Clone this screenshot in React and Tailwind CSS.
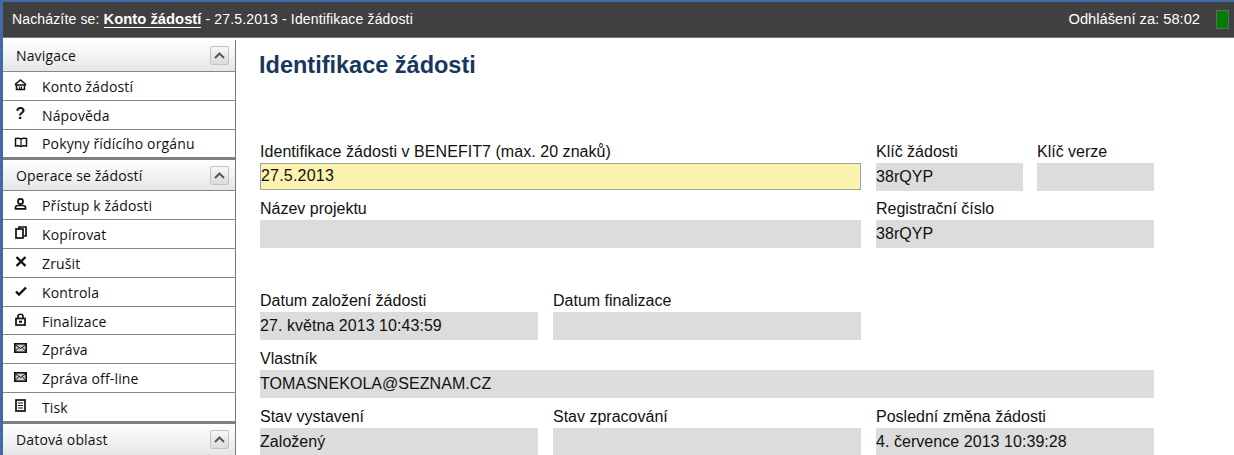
import React from "react";

function ChevronBox() {
  return (
    <div className="flex h-[19px] w-[19px] items-center justify-center rounded-[2px] border border-[#c4c4c4] bg-gradient-to-b from-[#f8f8f8] to-[#dcdcdc]">
      <svg width="11" height="7" viewBox="0 0 11 7" fill="none">
        <path d="M1 6 L5.5 1.5 L10 6" stroke="#555" strokeWidth="2" />
      </svg>
    </div>
  );
}

function Icon({ name }) {
  const c = "#111";
  if (name === "home")
    return (
      <svg width="13" height="12" viewBox="0 0 13 12" fill="none" stroke={c} strokeWidth="1.5">
        <path d="M1 5.5 L6.5 1 L12 5.5" />
        <path d="M1 6 H12" />
        <path d="M2.5 6 V10.5 H10.5 V6" />
        <path d="M5.5 7.5 V10.5 M7.5 7.5 V10.5" strokeWidth="1.2" />
      </svg>
    );
  if (name === "help")
    return <span className="w-[13px] text-center font-['Liberation_Sans',sans-serif] text-[16px] leading-none font-bold text-[#111]">?</span>;
  if (name === "book")
    return (
      <svg width="14" height="11" viewBox="0 0 14 11" fill="none" stroke={c} strokeWidth="1.5">
        <path d="M7 2 C5.5 1 3.5 1 1.5 1.5 V9 C3.5 8.5 5.5 8.5 7 9.5 C8.5 8.5 10.5 8.5 12.5 9 V1.5 C10.5 1 8.5 1 7 2 Z" />
        <path d="M7 2 V9.5" strokeWidth="1.2" />
      </svg>
    );
  if (name === "user")
    return (
      <svg width="13" height="12" viewBox="0 0 13 12" fill="none" stroke={c} strokeWidth="1.7">
        <circle cx="6.5" cy="3.5" r="2.6" />
        <path d="M1.5 10.8 V9.5 C1.5 8 3 7.5 4.5 7.5 H8.5 C10 7.5 11.5 8 11.5 9.5 V10.8 Z" />
      </svg>
    );
  if (name === "copy")
    return (
      <svg width="12" height="13" viewBox="0 0 12 13" fill="none" stroke={c} strokeWidth="1.7">
        <path d="M4 3 V1 H11 V10 H8.5" />
        <rect x="1" y="3" width="7" height="9" fill="#fff" />
      </svg>
    );
  if (name === "x")
    return (
      <svg width="12" height="11" viewBox="0 0 12 11" fill="none" stroke={c} strokeWidth="2.4">
        <path d="M1.5 1 L10.5 10 M10.5 1 L1.5 10" />
      </svg>
    );
  if (name === "check")
    return (
      <svg width="12" height="10" viewBox="0 0 12 10" fill="none" stroke={c} strokeWidth="2.4">
        <path d="M1 5.5 L4 8.5 L11 1.5" />
      </svg>
    );
  if (name === "lock")
    return (
      <svg width="11" height="13" viewBox="0 0 11 13" fill="none" stroke={c} strokeWidth="1.7">
        <path d="M3 5.5 V3.5 C3 0.5 8 0.5 8 3.5 V5.5" />
        <rect x="1" y="5.5" width="9" height="6.5" />
        <path d="M4 8.7 H7" strokeWidth="2" />
      </svg>
    );
  if (name === "mail")
    return (
      <svg width="13" height="10" viewBox="0 0 13 10" fill="none" stroke={c}>
        <rect x="0.8" y="0.8" width="11.4" height="8.4" strokeWidth="1.6" fill="#ccc" />
        <path d="M1 1.5 L6.5 5.5 L12 1.5 M1 8.5 L5 4.5 M12 8.5 L8 4.5" strokeWidth="1" />
      </svg>
    );
  return (
    <svg width="11" height="13" viewBox="0 0 11 13" fill="none" stroke={c} strokeWidth="1.7">
      <rect x="1" y="1" width="9" height="11" />
      <path d="M3 4 H8 M3 6.5 H8 M3 9 H8" strokeWidth="1.2" />
    </svg>
  );
}

function SideHeader({ title, className }) {
  return (
    <div className={`flex items-center justify-between border-b border-[#888] bg-gradient-to-b from-white to-[#e6e6e6] pr-[6px] pl-[13px] ${className}`}>
      <span className="text-[14px] tracking-[0.15px] text-[#111]">{title}</span>
      <ChevronBox />
    </div>
  );
}

function SideItem({ icon, label, className }) {
  return (
    <div className={`flex items-center bg-white ${className}`}>
      <div className="mr-[4px] flex w-[35px] justify-center pb-[3px]">
        <Icon name={icon} />
      </div>
      <span className="text-[14px] tracking-[0.15px] text-[#111]">{label}</span>
    </div>
  );
}

function Field({ label, value, className }) {
  return (
    <div className={className}>
      <div className="h-[30px] pt-[8px] text-[16px] leading-[22px] text-[#111]">{label}</div>
      <div className="h-[28px] bg-[#dcdcdc] text-[16px] leading-[27px] tracking-[0.05px] text-[#111]">{value}</div>
    </div>
  );
}

const row = "h-[29px] border-b border-[#888]";

const nav = [
  { icon: "home", label: "Konto žádostí", className: row },
  { icon: "help", label: "Nápověda", className: row },
  { icon: "book", label: "Pokyny řídícího orgánu", className: "h-[30px] border-b-[3px] border-[#808080]" },
];

const ops = [
  { icon: "user", label: "Přístup k žádosti", className: row },
  { icon: "copy", label: "Kopírovat", className: row },
  { icon: "x", label: "Zrušit", className: row },
  { icon: "check", label: "Kontrola", className: row },
  { icon: "lock", label: "Finalizace", className: "h-[28px] border-b border-[#888] pt-[1px]" },
  { icon: "mail", label: "Zpráva", className: row },
  { icon: "mail", label: "Zpráva off-line", className: row },
  { icon: "print", label: "Tisk", className: "h-[31px] border-b-[3px] border-[#808080]" },
];

export default function App() {
  return (
    <div className="h-[455px] w-[1234px] overflow-hidden border-t-2 border-l-[3px] border-[#3f6ca8] bg-white font-['Liberation_Sans',Arial,sans-serif]">
      <header className="flex h-[36px] items-center justify-between border-b border-[#777] bg-[#404040] pr-[5px] pl-[9px] text-[14px] tracking-[0.15px] text-white">
        <div>
          Nacházíte se: <span className="border-b border-white text-[14.8px] font-bold tracking-normal">Konto žádostí</span> - 27.5.2013 - Identifikace žádosti
        </div>
        <div className="flex items-center gap-[16px]">
          <span className="text-[14.7px] tracking-normal">Odhlášení za: 58:02</span>
          <div className="h-[19px] w-[13px] border border-[#666] bg-[#008000]" />
        </div>
      </header>
      <div className="flex">
        <aside className="mt-[2px] w-[233px] shrink-0 border-r border-[#777] font-['Open_Sans',sans-serif]">
          <SideHeader title="Navigace" className="h-[32px]" />
          {nav.map((n) => (
            <SideItem key={n.label} icon={n.icon} label={n.label} className={n.className} />
          ))}
          <SideHeader title="Operace se žádostí" className="h-[31px]" />
          {ops.map((n) => (
            <SideItem key={n.label} icon={n.icon} label={n.label} className={n.className} />
          ))}
          <SideHeader title="Datová oblast" className="h-[32px]" />
        </aside>
        <main className="pl-[24px]">
          <h1 className="mt-[11px] ml-[-1px] h-[32px] text-[23.5px] leading-[32px] font-bold text-[#17375e]">Identifikace žádosti</h1>
          <div className="mt-[52px] flex h-[57px] gap-[15px]">
            <div className="w-[601px]">
              <div className="h-[30px] pt-[8px] text-[16px] leading-[22px] tracking-[0.05px] text-[#111]">Identifikace žádosti v BENEFIT7 (max. 20 znaků)</div>
              <div className="h-[27px] border border-[#a0a0a0] bg-[#fbf3ae] text-[16px] leading-[23px] tracking-[0.2px] text-[#111]">27.5.2013</div>
            </div>
            <div className="flex gap-[14px]">
              <Field label="Klíč žádosti" value="38rQYP" className="w-[147px]" />
              <Field label="Klíč verze" value="" className="w-[117px]" />
            </div>
          </div>
          <div className="flex gap-[15px]">
            <Field label="Název projektu" value="" className="w-[601px]" />
            <Field label="Registrační číslo" value="38rQYP" className="w-[278px]" />
          </div>
          <div className="mt-[34px] flex gap-[15px]">
            <Field label="Datum založení žádosti" value="27. května 2013 10:43:59" className="w-[278px]" />
            <Field label="Datum finalizace" value="" className="w-[308px]" />
          </div>
          <Field label="Vlastník" value="TOMASNEKOLA@SEZNAM.CZ" className="w-[894px]" />
          <div className="flex gap-[15px]">
            <Field label="Stav vystavení" value="Založený" className="w-[278px]" />
            <Field label="Stav zpracování" value="" className="w-[308px]" />
            <Field label="Poslední změna žádosti" value="4. července 2013 10:39:28" className="w-[278px]" />
          </div>
        </main>
      </div>
    </div>
  );
}
